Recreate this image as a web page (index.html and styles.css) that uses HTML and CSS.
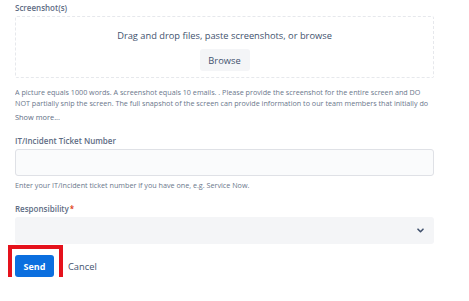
FILE: index.html
```html
<!DOCTYPE html>
<html>
<head>
<meta charset="utf-8">
<link rel="stylesheet" href="styles.css">
</head>
<body>
<form class="form">
  <div class="field field-first">
    <div class="label">Screenshot(s)</div>
    <div class="dropzone">
      <div class="drop-text">Drag and drop files, paste screenshots, or browse</div>
      <button type="button" class="browse">Browse</button>
    </div>
    <div class="help help-long">A picture equals 1000 words. A screenshot equals 10 emails. . Please provide the screenshot for the entire screen and DO NOT partially snip the screen. The full snapshot of the screen can provide information to our team members that initially do not seem relevant.</div>
    <div class="show-more">Show more...</div>
  </div>
  <div class="field">
    <div class="label">IT/Incident Ticket Number</div>
    <div class="input"></div>
    <div class="help help-short">Enter your IT/Incident ticket number if you have one, e.g. Service Now.</div>
  </div>
  <div class="field">
    <div class="label">Responsibility<span class="req">*</span></div>
    <div class="select">
      <svg class="chev" width="7" height="5" viewBox="0 0 7 5"><path d="M1 1.2 L3.5 3.7 L6 1.2" fill="none" stroke="#42526e" stroke-width="1.6" stroke-linecap="round" stroke-linejoin="round"/></svg>
    </div>
  </div>
  <div class="actions">
    <span class="send-wrap"><button type="button" class="send">Send</button></span>
    <span class="cancel">Cancel</span>
  </div>
</form>
</body>
</html>
```
FILE: styles.css
```css
html, body {
  margin: 0;
  padding: 0;
  background: #ffffff;
}
body {
  font-family: "Open Sans", "Noto Sans", "Liberation Sans", sans-serif;
  color: #172b4d;
}
.form {
  width: 419px;
  padding: 2px 0 0 15px;
}
.label {
  font-size: 8px;
  font-weight: 600;
  color: #5e6c84;
  line-height: 12px;
  height: 12px;
}
.req {
  color: #de350b;
  margin-left: 1px;
}
.dropzone {
  margin-top: 2px;
  height: 60px;
  border: 1px dashed #e6e8ec;
  border-radius: 2px;
  display: flex;
  flex-direction: column;
  align-items: center;
}
.drop-text {
  margin-top: 12px;
  font-size: 9.3px;
  line-height: 14px;
  color: #42526e;
}
.browse {
  margin-top: 6px;
  width: 50px;
  height: 22px;
  border: none;
  border-radius: 3px;
  background: #f4f5f7;
  font-family: inherit;
  font-size: 9.3px;
  color: #42526e;
  padding: 0;
}
.help {
  font-size: 7.2px;
  line-height: 11px;
  color: #6b778c;
  white-space: nowrap;
  overflow: hidden;
}
.help-long {
  white-space: normal;
  height: 22px;
  margin-top: 9px;
}
.help-short {
  margin-top: 4px;
}
.show-more {
  font-size: 7.4px;
  line-height: 11px;
  color: #5e6c84;
  margin-top: 3px;
}
.field {
  margin-top: 14px;
}
.field-first {
  margin-top: 0;
}
.field + .field {
  margin-top: 12px;
}
.input {
  margin-top: 2px;
  height: 25px;
  border: 1px solid #dfe1e6;
  border-radius: 3px;
  background: #fafbfc;
}
.select {
  margin-top: 2px;
  height: 27px;
  border-radius: 3px;
  background: #f4f5f7;
  display: flex;
  align-items: center;
  justify-content: flex-end;
  padding-right: 10px;
}
.actions {
  margin-top: 11px;
  display: flex;
  align-items: center;
  gap: 14px;
}
.send-wrap {
  position: relative;
  display: inline-flex;
}
.send-wrap::after {
  content: "";
  position: absolute;
  top: -10px;
  left: -7px;
  right: -9px;
  bottom: -10px;
  border: 4px solid #e5121c;
  pointer-events: none;
}
.send {
  width: 39px;
  height: 22px;
  border: none;
  border-radius: 3px;
  background: #0b6fdf;
  color: #ffffff;
  font-family: inherit;
  font-size: 9px;
  font-weight: 700;
  padding: 0;
}
.cancel {
  font-size: 9.3px;
  color: #42526e;
}
```
